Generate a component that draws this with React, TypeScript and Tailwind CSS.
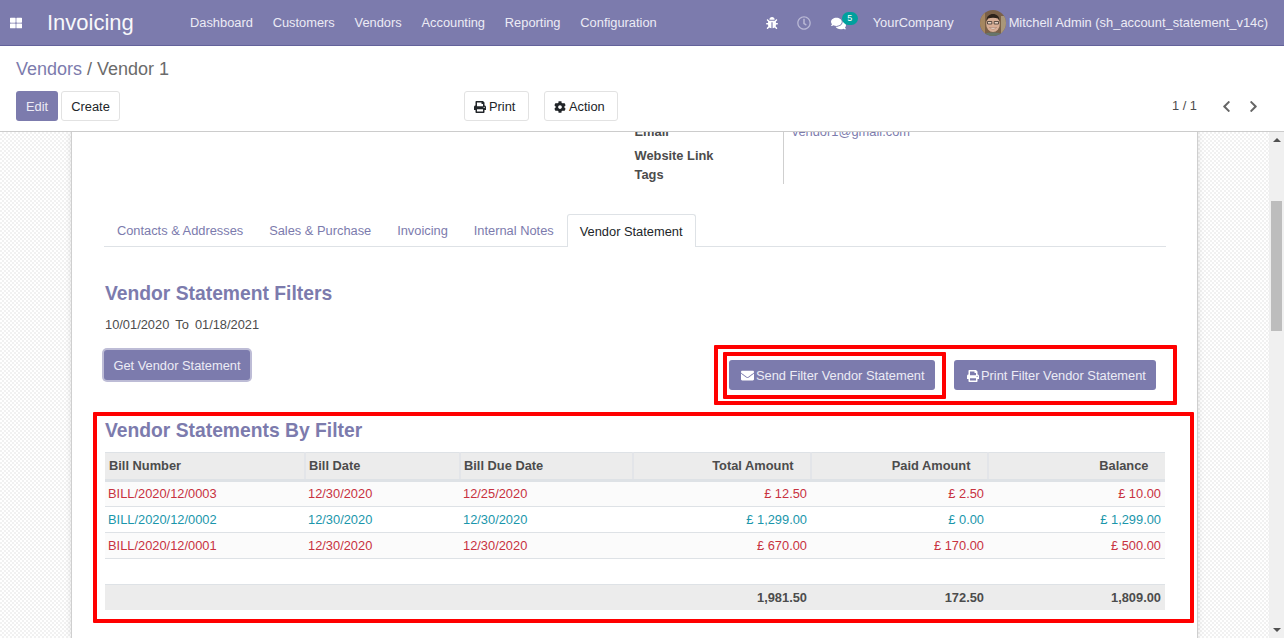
import React from "react";
import { FaThLarge, FaBug, FaRegClock, FaComments, FaPrint, FaCog, FaEnvelope, FaChevronLeft, FaChevronRight } from "react-icons/fa";

const nav = ["Dashboard", "Customers", "Vendors", "Accounting", "Reporting", "Configuration"];
const tabs = ["Contacts & Addresses", "Sales & Purchase", "Invoicing", "Internal Notes"];
const rows = [
  { c: "text-[#c8323f]", bg: "bg-[#fbfbfb]", v: ["BILL/2020/12/0003", "12/30/2020", "12/25/2020", "£ 12.50", "£ 2.50", "£ 10.00"] },
  { c: "text-[#1a96ab]", bg: "bg-white", v: ["BILL/2020/12/0002", "12/30/2020", "12/30/2020", "£ 1,299.00", "£ 0.00", "£ 1,299.00"] },
  { c: "text-[#c8323f]", bg: "bg-[#fbfbfb]", v: ["BILL/2020/12/0001", "12/30/2020", "12/30/2020", "£ 670.00", "£ 170.00", "£ 500.00"] },
];
const heads = ["Bill Number", "Bill Date", "Bill Due Date", "Total Amount", "Paid Amount", "Balance"];

function Avatar() {
  return (
    <svg width="26" height="26" viewBox="0 0 26 26" className="rounded-full shrink-0">
      <rect width="26" height="26" fill="#7a6048" />
      <rect x="0" y="0" width="5" height="26" fill="#a58660" />
      <rect x="21" y="6" width="5" height="20" fill="#a9977a" />
      <ellipse cx="13" cy="14" rx="6.800" ry="8" fill="#d8ae96" />
      <path d="M6.500 11c0-5 3-7 6.500-7s6.500 2 6.500 7l-1.500-2.500c-3-1-7-1-10 0z" fill="#2e231b" />
      <path d="M7.500 11.500h4.300v2.500H7.500zM14.200 11.500h4.300v2.500h-4.300z" fill="#e6d0c2" stroke="#3c332c" strokeWidth=".8" />
      <path d="M9.500 17.500c2.300 2 4.700 2 7 0z" fill="#f6efe9" stroke="#9a6a58" strokeWidth=".5" />
      <path d="M3 26c1-3 5-3.500 10-3.500s9 .5 10 3.500z" fill="#66756b" />
    </svg>
  );
}

export default function App() {
  return (
    <div className="relative flex h-[638px] w-[1284px] flex-col overflow-hidden bg-white text-[12.85px] text-[#4c4c4c] [font-family:'Liberation_Sans',Arial,sans-serif]">
      {/* Navbar */}
      <header className="flex h-[46px] shrink-0 items-center border-b border-[#63629a] bg-[#7c7bad] text-white">
        <div className="flex w-[47px] shrink-0 justify-start pl-[10px]">
          <FaThLarge className="h-[12px] w-[12px]" />
        </div>
        <div className="w-[143px] shrink-0 text-[22px] leading-none opacity-95">Invoicing</div>
        <nav className="flex gap-[19.8px] text-[#ecebf5]">
          {nav.map((n) => (
            <span key={n}>{n}</span>
          ))}
        </nav>
        <div className="ml-auto flex items-center pr-[16px] text-[#ecebf5]">
          <FaBug className="h-[12px] w-[12px] text-white" />
          <FaRegClock className="ml-[19px] h-[14px] w-[14px] text-[#b9b8d5]" />
          <div className="relative ml-[20px] h-[14px] w-[42px]">
            <FaComments className="h-[15px] w-[15px] text-white" />
            <span className="absolute left-[11px] top-[-4px] flex h-[13px] w-[16px] items-center justify-center rounded-full bg-[#00a09d] text-[9px] leading-none text-white">5</span>
          </div>
          <span>YourCompany</span>
          <div className="ml-[26px]"><Avatar /></div>
          <span className="ml-[3px] text-[12.9px]">Mitchell Admin (sh_account_statement_v14c)</span>
        </div>
      </header>

      {/* Control panel */}
      <section className="flex h-[86px] shrink-0 flex-col border-b border-[#cccccc] px-[16px]">
        <div className="mt-[12px] text-[18px] leading-[22px] text-[#6b6b6b]">
          <span className="text-[#7c7bad]">Vendors</span> / Vendor 1
        </div>
        <div className="mt-[11px] flex items-center">
          <button className="h-[30px] w-[42px] rounded-[3px] bg-[#7c7bad] pt-[1px] text-[#ecebf5]">Edit</button>
          <button className="ml-[3px] h-[30px] w-[59px] rounded-[3px] border border-[#e2e2e2] bg-white pt-[1px] text-[#212529]">Create</button>
          <button className="ml-[344px] flex h-[30px] w-[65px] items-center gap-[3px] rounded-[3px] border border-[#e2e2e2] bg-white pl-[9px] pt-[1px] text-[#212529]">
            <FaPrint className="h-[12px] w-[12px]" />Print
          </button>
          <button className="ml-[15px] flex h-[30px] w-[74px] items-center gap-[3px] rounded-[3px] border border-[#e2e2e2] bg-white pl-[9px] pt-[1px] text-[#212529]">
            <FaCog className="h-[12px] w-[12px]" />Action
          </button>
          <span className="ml-auto text-[#4c4c4c]">1 / 1</span>
          <FaChevronLeft className="ml-[23px] h-[13px] w-[13px] text-[#666666]" />
          <FaChevronRight className="ml-[14px] mr-[8px] h-[13px] w-[13px] text-[#666666]" />
        </div>
      </section>

      {/* Content */}
      <main className="flex min-h-0 flex-1">
        <div className="min-w-0 flex-1 overflow-hidden bg-[repeating-conic-gradient(#f1f1f1_0_25%,#ffffff_0_50%)] bg-[length:4px_4px] pl-[71px]">
          <div className="h-full w-[1127px] overflow-hidden border-x border-[#cfcfcf] bg-white pl-[32px] pr-[31px] shadow-[0_0_6px_rgba(0,0,0,0.12)]">
            {/* Partner fields, scrolled past the top */}
            <div className="-mt-[10px] flex pl-[530.5px]">
              <div className="w-[148.5px] font-bold leading-[19px]">
                <div className="h-[24px]">Email</div>
                <div className="h-[19px]">Website Link</div>
                <div className="h-[19px]">Tags</div>
              </div>
              <div className="h-[62px] border-l border-[#cfcfcf] pl-[8px] leading-[19px] text-[#7c7bad]">vendor1@gmail.com</div>
            </div>

            {/* Tabs */}
            <div className="mt-[30px] flex h-[33px] border-b border-[#dee2e6]">
              {tabs.map((t) => (
                <span key={t} className="flex h-[32px] items-center pl-[12.9px] pr-[13px] pt-[1px] text-[#7c7bad]">{t}</span>
              ))}
              <span className="flex h-[33px] items-center rounded-t-[3px] border border-b-0 border-[#dee2e6] bg-white px-[12px] pt-[1px] text-[#212529]">Vendor Statement</span>
            </div>

            <div className="pl-[1px]">
              <h2 className="mt-[34px] text-[19.3px] font-bold leading-[26px] text-[#7c7bad]">Vendor Statement Filters</h2>
              <div className="mt-[8px] flex gap-[6px] leading-[20px]">
                <span>10/01/2020</span><span>To</span><span>01/18/2021</span>
              </div>

              <div className="flex">
                <button className="-ml-[1px] mt-[15px] h-[30px] w-[146px] rounded-[3px] bg-[#7c7bad] pt-[1px] text-[#ecebf5] ring-2 ring-[#bdbcd6]">Get Vendor Statement</button>
                <button className="ml-[479px] mt-[25px] flex h-[30px] w-[206px] items-center gap-[2px] rounded-[3px] bg-[#7c7bad] pl-[12px] pt-[1px] text-[#ecebf5]">
                  <FaEnvelope className="h-[13px] w-[13px] text-white" />Send Filter Vendor Statement
                </button>
                <button className="ml-[19px] mt-[25px] flex h-[30px] w-[202px] items-center gap-[2px] rounded-[3px] bg-[#7c7bad] pl-[13px] pt-[1px] text-[#ecebf5]">
                  <FaPrint className="h-[12px] w-[12px] text-white" />Print Filter Vendor Statement
                </button>
              </div>

              <h2 className="mt-[28px] text-[19.3px] font-bold leading-[26px] text-[#7c7bad]">Vendor Statements By Filter</h2>

              <table className="mt-[8px] w-[1060px] table-fixed border-collapse">
                <colgroup>
                  <col className="w-[200px]" />
                  <col className="w-[155px]" />
                  <col className="w-[173px]" />
                  <col className="w-[178px]" />
                  <col className="w-[177px]" />
                  <col className="w-[177px]" />
                </colgroup>
                <thead>
                  <tr className="h-[28px] border-y border-b-[3px] border-[#dee2e6] bg-[#ececec]">
                    {heads.map((h, i) => (
                      <th key={h} className={`border-r-2 border-[#e3e5e9] font-bold text-[#4c4c4c] last:border-r-0 ${i > 2 ? "pr-[16.5px] text-right" : i === 0 ? "pl-[4px] text-left" : "pl-[3px] text-left"}`}>{h}</th>
                    ))}
                  </tr>
                </thead>
                <tbody>
                  {rows.map((r) => (
                    <tr key={r.v[0]} className={`h-[26px] border-b border-[#dee2e6] ${r.bg} ${r.c}`}>
                      {r.v.map((v, i) => (
                        <td key={i} className={i > 2 ? "pr-[4px] text-right" : "pl-[3px]"}>{v}</td>
                      ))}
                    </tr>
                  ))}
                  <tr className="h-[26px] border-b border-[#dee2e6]"><td colSpan={6} /></tr>
                  <tr className="h-[25px] bg-[#ececec] font-bold text-[#4c4c4c]">
                    <td colSpan={3} />
                    <td className="pr-[4px] text-right">1,981.50</td>
                    <td className="pr-[4px] text-right">172.50</td>
                    <td className="pr-[4px] text-right">1,809.00</td>
                  </tr>
                </tbody>
              </table>
            </div>
          </div>
        </div>

        {/* Scrollbar */}
        <div className="flex w-[15px] shrink-0 flex-col items-center bg-[#f0f0f0]">
          <div className="mt-[6px] h-0 w-0 border-x-[4px] border-b-[4px] border-x-transparent border-b-[#505050]" />
          <div className="mt-[59px] h-[130px] w-[11px] bg-[#bdbdbd]" />
          <div className="mb-[6px] mt-auto h-0 w-0 border-x-[4px] border-t-[4px] border-x-transparent border-t-[#505050]" />
        </div>
      </main>

      {/* Annotation boxes drawn over the screenshot */}
      <div className="pointer-events-none absolute left-[714px] top-[345px] h-[60px] w-[463px] rounded-[1px] border-[4px] border-[#ff0000]" />
      <div className="pointer-events-none absolute left-[723px] top-[352px] h-[47px] w-[223px] rounded-[1px] border-[4px] border-[#ff0000]" />
      <div className="pointer-events-none absolute left-[93px] top-[412px] h-[211px] w-[1101px] rounded-[1px] border-[4px] border-[#ff0000]" />
    </div>
  );
}
